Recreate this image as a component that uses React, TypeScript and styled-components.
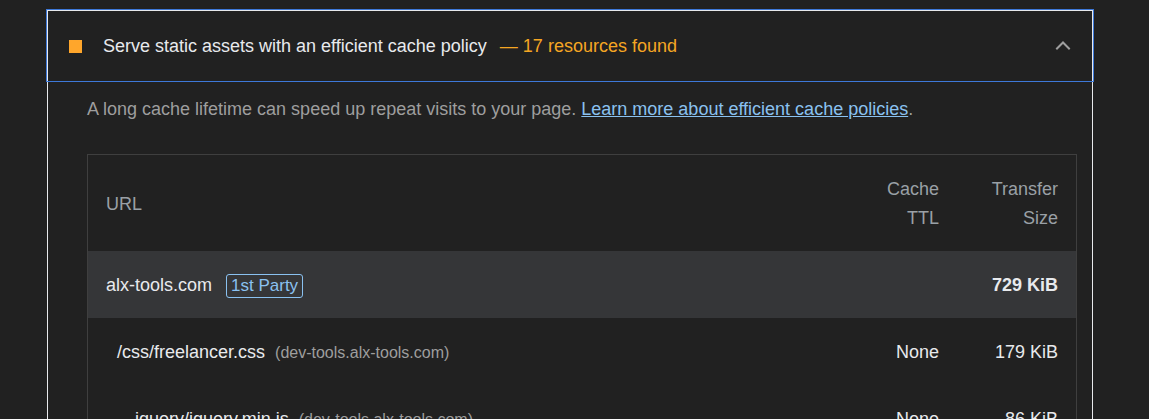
import styled, { createGlobalStyle } from "styled-components";

const GlobalStyle = createGlobalStyle`
  html, body {
    margin: 0;
    padding: 0;
    background: #212121;
    font-family: "Liberation Sans", Arial, sans-serif;
    -webkit-font-smoothing: antialiased;
  }
  body {
    padding-top: 10px;
    height: 419px;
    box-sizing: border-box;
    overflow: hidden;
  }
`;

type Row = {
  url: string;
  host: string;
  ttl: string;
  size: string;
};

const rows: Row[] = [
  {
    url: "/css/freelancer.css",
    host: "(dev-tools.alx-tools.com)",
    ttl: "None",
    size: "179 KiB",
  },
  {
    url: "…jquery/jquery.min.js",
    host: "(dev-tools.alx-tools.com)",
    ttl: "None",
    size: "86 KiB",
  },
];

const Chevron = () => (
  <svg width="16" height="10" viewBox="0 0 16 10" fill="none">
    <path
      d="M2 8.5 L8 2.5 L14 8.5"
      stroke="#9e9e9e"
      strokeWidth="2"
      strokeLinecap="square"
    />
  </svg>
);

export default function App() {
  return (
    <>
      <GlobalStyle />
      <Audit>
        <Summary>
          <ScoreIcon />
          <Title>
            Serve static assets with an efficient cache policy
            <DisplayText>— 17 resources found</DisplayText>
          </Title>
          <Toggle>
            <Chevron />
          </Toggle>
        </Summary>
        <Body>
          <Description>
            A long cache lifetime can speed up repeat visits to your page.{" "}
            <Link href="#">Learn more about efficient cache policies</Link>.
          </Description>
          <Table>
            <HeadRow>
              <HeadCell>URL</HeadCell>
              <HeadCell $numeric>
                Cache
                <br />
                TTL
              </HeadCell>
              <HeadCell $numeric>
                Transfer
                <br />
                Size
              </HeadCell>
            </HeadRow>
            <GroupRow>
              <Cell>
                alx-tools.com
                <Badge>1st Party</Badge>
              </Cell>
              <Cell $numeric />
              <Cell $numeric $bold>
                729 KiB
              </Cell>
            </GroupRow>
            {rows.map((r) => (
              <ItemRow key={r.url}>
                <Cell $sub>
                  {r.url}
                  <Host>{r.host}</Host>
                </Cell>
                <Cell $numeric>{r.ttl}</Cell>
                <Cell $numeric>{r.size}</Cell>
              </ItemRow>
            ))}
          </Table>
        </Body>
      </Audit>
    </>
  );
}

const Audit = styled.div`
  margin-left: 47px;
  width: 1046px;
  box-sizing: border-box;
  border-left: 1px solid #e8eaed;
  border-right: 1px solid #e8eaed;
`;

const Summary = styled.div`
  margin: 0 -1px;
  height: 71px;
  box-sizing: border-box;
  border: 1px solid #e8eaed;
  border-bottom: none;
  outline: 1px solid #3d78d8;
  display: flex;
  align-items: center;
  padding: 0 20px 0 21px;
`;

const ScoreIcon = styled.span`
  width: 13px;
  height: 13px;
  background: #ffa62b;
  flex-shrink: 0;
  margin-right: 21px;
`;

const Title = styled.div`
  flex: 1;
  font-size: 18px;
  color: #e8eaed;
  white-space: nowrap;
`;

const DisplayText = styled.span`
  color: #f5a623;
  margin-left: 13px;
`;

const Toggle = styled.span`
  display: flex;
  align-items: center;
  margin-top: -3px;
  margin-right: 1px;
`;

const Body = styled.div`
  padding: 15px 15px 0 39px;
`;

const Description = styled.div`
  font-size: 18px;
  line-height: 27px;
  color: #9e9e9e;
  margin-bottom: 31px;
`;

const Link = styled.a`
  color: #8ac1f0;
  text-decoration: underline;
`;

const Table = styled.div`
  border: 1px solid #3f3f3f;
  border-bottom: none;
`;

const RowBase = styled.div`
  display: grid;
  grid-template-columns: 1fr 88px 119px;
`;

const HeadRow = styled(RowBase)``;

const GroupRow = styled(RowBase)`
  background: #353638;
`;

const ItemRow = styled(RowBase)``;

const HeadCell = styled.div<{ $numeric?: boolean }>`
  padding: 20px 18px 18px;
  font-size: 18px;
  line-height: 29px;
  color: #9aa0a6;
  display: flex;
  align-items: center;
  justify-content: ${(p) => (p.$numeric ? "flex-end" : "flex-start")};
  text-align: ${(p) => (p.$numeric ? "right" : "left")};
`;

const Cell = styled.div<{ $numeric?: boolean; $bold?: boolean; $sub?: boolean }>`
  padding: 20px 18px 18px ${(p) => (p.$sub ? "29px" : "18px")};
  font-size: 18px;
  line-height: 29px;
  color: #e8eaed;
  font-weight: ${(p) => (p.$bold ? 700 : 400)};
  text-align: ${(p) => (p.$numeric ? "right" : "left")};
  white-space: nowrap;
  display: flex;
  align-items: center;
  justify-content: ${(p) => (p.$numeric ? "flex-end" : "flex-start")};
`;

const Badge = styled.span`
  margin-left: 14px;
  padding: 0 4px;
  border: 1px solid #8ac1f0;
  border-radius: 3px;
  color: #8ac1f0;
  font-size: 17px;
  line-height: 22px;
`;

const Host = styled.span`
  margin-left: 10px;
  font-size: 16px;
  color: #9e9e9e;
`;
